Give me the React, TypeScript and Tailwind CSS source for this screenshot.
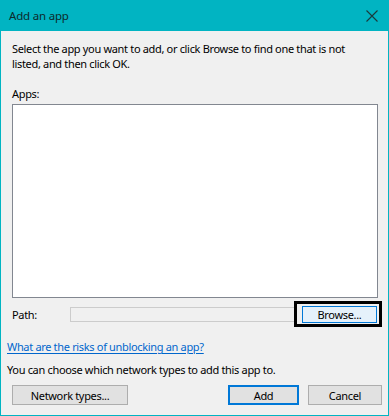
export default function App() {
  return (
    <div
      className="w-[389px] h-[416px] flex flex-col bg-[#01b4c2] text-[11px] tracking-[-0.33px] text-black overflow-hidden"
      style={{ fontFamily: '"Noto Sans", "Open Sans", sans-serif' }}
    >
      {/* Title bar */}
      <div className="h-[31px] shrink-0 flex items-center justify-between pl-[9px] pr-[10px]">
        <span className="text-[11.5px] tracking-[-0.2px] text-[#0d2a2c]">Add an app</span>
        <svg width="12" height="12" viewBox="0 0 12 12" className="mr-[1px]">
          <path d="M0.5 0.5 L11.5 11.5 M11.5 0.5 L0.5 11.5" stroke="#1a3a3c" strokeWidth="1.1" />
        </svg>
      </div>

      {/* Body */}
      <div className="flex-1 mx-px mb-px bg-[#f0f0f0] flex flex-col leading-[15px]">
        <p className="mt-[10px] pl-[11px] pr-[20px]">
          Select the app you want to add, or click Browse to find one that is not listed, and then click OK.
        </p>

        <p className="mt-[15px] pl-[11px]">Apps:</p>

        <div className="mt-[3px] ml-[11px] mr-[10px] h-[194px] bg-white border border-[#828790]" />

        {/* Path row */}
        <div className="mt-[3px] flex items-center pl-[11px] pr-[6px]">
          <span className="w-[58px]">Path:</span>
          <div className="flex-1 h-[15px] bg-[#f0f0f0] border border-[#cccccc] border-r-0" />
          <div className="w-[88px] h-[26px] border-[3px] border-black flex items-center pl-[5px] pr-[2px]">
            <div className="flex-1 h-[17px] bg-[#e5f1fb] border border-[#0078d7] flex items-center justify-center">
              Browse...
            </div>
          </div>
        </div>

        <a href="#" className="mt-[12px] ml-[6px] self-start text-[#0066cc] underline underline-offset-2">
          What are the risks of unblocking an app?
        </a>

        <p className="mt-[8px] pl-[6px]">You can choose which network types to add this app to.</p>

        {/* Buttons */}
        <div className="mt-[8px] flex items-center pl-[11px] pr-[6px]">
          <button className="w-[116px] h-[20px] bg-[#e1e1e1] border border-[#adadad] flex items-center justify-center">
            Network types...
          </button>
          <div className="flex-1" />
          <button className="w-[71px] h-[20px] bg-[#e1e1e1] border-2 border-[#0078d7] flex items-center justify-center">
            Add
          </button>
          <button className="ml-[9px] w-[74px] h-[20px] bg-[#e1e1e1] border border-[#adadad] flex items-center justify-center">
            Cancel
          </button>
        </div>
      </div>
    </div>
  );
}
